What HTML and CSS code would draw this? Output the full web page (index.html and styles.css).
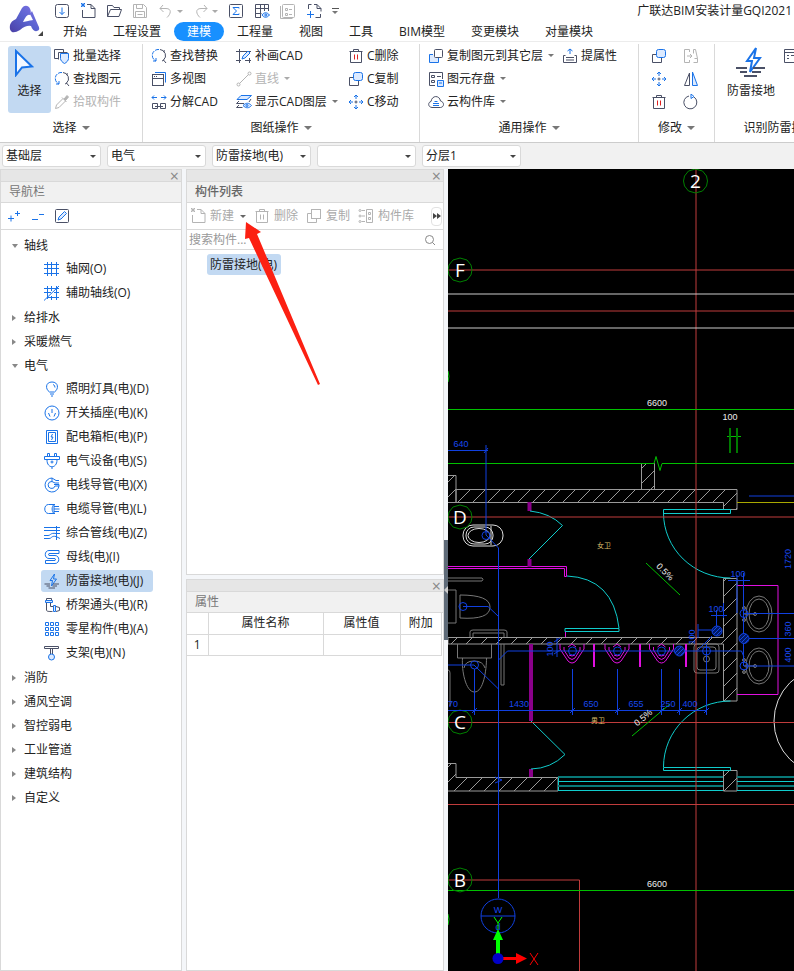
FILE: index.html
```html
<!DOCTYPE html>
<html lang="zh-CN">
<head>
    <meta charset="UTF-8">
    <meta name="viewport" content="width=device-width, initial-scale=1.0">
    <title>广联达BIM安装计量GQI2021</title>
    <link rel="stylesheet" href="styles.css">
</head>
<body>

<!-- Icon set -->
<svg class="sprite" aria-hidden="true">
    <symbol id="i-down" viewBox="0 0 16 16"><rect class="k" x="1.5" y="1.5" width="13" height="13" rx="2"/><path class="b" d="M8 4.500v7M5.500 9L8 11.500L10.500 9"/></symbol>
    <symbol id="i-new" viewBox="0 0 16 16"><path class="k" d="M7 1.500h4l4 4v9H2.500V7M11 1.500v4h4"/><path class="b" d="M1 0l4 4M5 0L1 4M3 0v4M1 2h4"/></symbol>
    <symbol id="i-open" viewBox="0 0 16 16"><path class="k" d="M1.500 13.500v-11h5l1.500 2h5.500v2M1.500 13.500l3-7h11l-2.500 7z"/></symbol>
    <symbol id="i-save" viewBox="0 0 16 16"><path class="k" d="M1.500 1.500h10l3 3v10h-13zM4.500 1.500v4h6v-4M3.500 14.500v-6h9v6M5.500 11.500h5"/></symbol>
    <symbol id="i-undo" viewBox="0 0 16 16"><path class="k" d="M5 2L2 5.500L5.500 9M2 5.500h6c6 0 5 5.500 1 9"/></symbol>
    <symbol id="i-redo" viewBox="0 0 16 16"><path class="k" d="M11 2l3 3.500L10.500 9M14 5.500H8c-6 0-5 5.500-1 9"/></symbol>
    <symbol id="i-sum" viewBox="0 0 16 16"><rect class="k" x="1.500" y="1.500" width="13" height="13" rx="1"/><path class="b" d="M11 5.500V4.500H5L8.500 8L5 11.500h6v-1"/></symbol>
    <symbol id="i-gridview" viewBox="0 0 16 16"><path class="k" d="M7 14.500H1.500v-13h13V8M1.500 5.500h13M1.500 10.500h6M6.500 1.500v13M10.500 1.500V8"/><path class="b f" d="M8 12c2-3 5-3 7.500 0c-2.500 3-5.500 3-7.500 0z"/><circle class="b" cx="11.800" cy="12" r="1"/></symbol>
    <symbol id="i-form" viewBox="0 0 16 16"><rect class="k" x="2.500" y="1.500" width="12" height="13" rx="1"/><path class="k" d="M0.500 3v12.500h12M5.500 5.500h2v2h-2zM5.500 10.500h2v2h-2zM9 6.500h3M9 11.500h3"/></symbol>
    <symbol id="i-pageadd" viewBox="0 0 16 16"><path class="k" d="M2.500 6V1.500h3M8 1.500h3l4 4v3M11 1.500v4h4M14.500 11v3.500h-5"/><path class="b" d="M4.500 8v7M1 11.500h7"/></symbol>
    <symbol id="i-batch" viewBox="0 0 16 16"><path class="k" d="M4 10.500H0.500v-9h9V4"/><path class="k w" d="M4.500 11.500v-7h9"/><path class="b f" d="M6.500 5.500h8v5c0 2-2 4-4 5c-2-1-4-3-4-5z"/></symbol>
    <symbol id="i-find" viewBox="0 0 16 16"><path class="b" stroke-dasharray="4 1" d="M8 1.500a6 6 0 0 0-3 11.500M5 13v-3M5 13H2"/><path class="k" d="M9 1.500a6 6 0 0 1 3.500 10.500l2.500 3M12 4l2-1.500M11 13l2-1"/></symbol>
    <symbol id="i-pick" viewBox="0 0 16 16"><path class="k" d="M9 4.500L2.500 11L1.500 14.500L5 13.500L11.500 7M8 3.500l4.500 4.500"/><path class="k g" d="M10 5l3-3.500l1.500 1.500L11.500 6.500z"/></symbol>
    <symbol id="i-multi" viewBox="0 0 16 16"><path class="b" d="M4 1.500h10.500v10"/><rect class="k" x="1.500" y="3.500" width="11" height="11"/><path class="k" d="M1.500 7.500h11M3 5.500h1M5 5.500h1"/></symbol>
    <symbol id="i-split" viewBox="0 0 16 16"><path class="b" d="M6 3.500H1M3 1.500L1 3.500L3 5.500M10 3.500h5M13 1.500l2 2l-2 2"/><path class="k" d="M1.500 14.500v-5h5v5zM9.500 14.500v-5h5v5zM4 12.500h8"/></symbol>
    <symbol id="i-draw" viewBox="0 0 16 16"><path class="k" d="M3.500 1v14M0 3.500h15M0 12.500h5M13.500 10v5M9 12.500h6"/><path class="b f" d="M6 11l1-3L12 3l2 2l-5 5z"/></symbol>
    <symbol id="i-line" viewBox="0 0 16 16"><path class="k" d="M3.500 12.500l9-9"/><circle class="k" cx="2.500" cy="13.500" r="1.500"/><circle class="k" cx="13.500" cy="2.500" r="1.500"/></symbol>
    <symbol id="i-layers" viewBox="0 0 16 16"><path class="b f" d="M1 5.500L5 1.500h10.500L11 5.500z"/><path class="k" d="M0.500 9.500H8M0.500 13.500h6M0.500 9.500L3 7M0.500 13.500L3 11M15 5l-2 3"/><path class="b f" d="M7 11.500c3-3 6-3 8.500 0c-2.500 3-5.500 3-8.500 0z"/><circle class="b" cx="11" cy="11.500" r="1"/></symbol>
    <symbol id="i-trash" viewBox="0 0 16 16"><path class="k" d="M1.500 3.500h13M5.500 3.500v-2h5v2M2.500 3.500v11h11v-11"/><path class="r" d="M6.500 6.500v5M9.500 6.500v5"/></symbol>
    <symbol id="i-copy" viewBox="0 0 16 16"><path class="k" d="M5 6.500H1.500v8h9V10"/><rect class="b f" x="5.500" y="1.500" width="9" height="8" rx="2"/></symbol>
    <symbol id="i-copyto" viewBox="0 0 16 16"><path class="b f" d="M5 6.500H1.500v8h9V10"/><rect class="k w" x="6.500" y="1.500" width="8" height="8" rx="1"/></symbol>
    <symbol id="i-move" viewBox="0 0 16 16"><path class="b" d="M8 5V1M6 3l2-2l2 2M8 11v4M6 13l2 2l2-2M5 8H1M3 6L1 8l2 2M11 8h4M13 6l2 2l-2 2"/><path class="k" d="M6.500 8h3M8 6.500v3"/></symbol>
    <symbol id="i-store" viewBox="0 0 16 16"><path class="k" d="M7 14.500H1.500v-13h13V8M3.500 4.500h3v2h-3zM3.500 9.500h3v2h-3zM9 5.500h4"/><path class="b f" d="M9.500 9.500h6v6h-6zM11 12h3"/></symbol>
    <symbol id="i-cloud" viewBox="0 0 16 16"><path class="k" d="M4 13.500C-0.500 13 0 8 3 7.500C4 1 11.500 1 12.500 7c4 1 4 6 0 6.500z"/><path class="b" d="M5 11.500h6M5 9.500h6M6.500 7.500h3"/></symbol>
    <symbol id="i-lift" viewBox="0 0 16 16"><path class="b" d="M8 6V1M5.500 3L8 1l2.500 2"/><path class="k" d="M3.500 7.500h-2v7h13v-7h-2M4 9.500h8M4 12h8"/></symbol>
    <symbol id="i-extend" viewBox="0 0 16 16"><path class="k" d="M6.500 4V1.500h-5v13h5V12M4 8h5M7 6l2 2l-2 2M10.500 1.500h2l2 9v4h-4M10.500 1.500v4M14.500 10.500h-3"/></symbol>
    <symbol id="i-mirror" viewBox="0 0 16 16"><path class="k" d="M6.500 2v12.500h-5z"/><path class="b f" d="M9.500 1v13.500h5z"/></symbol>
    <symbol id="i-rotate" viewBox="0 0 16 16"><path class="k" d="M11 3a6.500 6.500 0 1 1-5-1"/><path class="b" d="M8 0l3 2.500L8 4.500z"/></symbol>
    <symbol id="i-bolt" viewBox="0 0 32 32"><path class="b" stroke-width="2" d="M21 2L12 15h5l-2 11L25 12h-6z"/><path class="k" stroke-width="2" d="M1 22h11M18 22h12M5 26h7M17 26h9M9 30h13"/></symbol>
    <symbol id="i-sheet" viewBox="0 0 16 16"><path class="k" d="M1.500 1.500h13v13h-13zM1.500 4.500h13M4 7.500h2M4 10.500h2M8 7.500h5"/></symbol>
    <symbol id="i-expand" viewBox="0 0 16 16"><path class="b" d="M2 10.500h6M5 7.500v6M9 5.500h5M11.500 3v5"/></symbol>
    <symbol id="i-collapse" viewBox="0 0 16 16"><path class="b" d="M2 11.500h6M9 6.500h5"/></symbol>
    <symbol id="i-edit" viewBox="0 0 16 16"><rect class="k" x="1.500" y="1.500" width="13" height="13" rx="1"/><path class="b f" d="M4 12l1-3l5.500-5.500l2 2L7 11z"/></symbol>
    <symbol id="i-dup" viewBox="0 0 16 16"><path class="k" d="M5 5.500H1.500v9h9V11"/><rect class="k w" x="5.500" y="1.500" width="9" height="9"/></symbol>
    <symbol id="i-lib" viewBox="0 0 16 16"><path class="k" d="M8.500 1.500h6v13h-6zM10.500 4.500h2v2h-2zM10.500 9.500h2v2h-2zM3.500 2.500H7M3.500 8H7M3.500 13.500H7"/><circle class="k" cx="2" cy="2.500" r="1"/><circle class="k" cx="2" cy="8" r="1"/><circle class="k" cx="2" cy="13.500" r="1"/></symbol>
    <symbol id="i-search" viewBox="0 0 16 16"><circle class="k" cx="7.500" cy="7.500" r="4"/><path class="k" d="M10.500 10.500L13 13"/></symbol>
    <!-- tree icons -->
    <symbol id="t-grid" viewBox="0 0 16 16"><path class="b" d="M3.500 1v14M7.500 1v14M12.500 1v14M0 3.500h15M0 7.500h15M0 12.500h15"/></symbol>
    <symbol id="t-aux" viewBox="0 0 16 16"><path class="b" d="M3.500 1v13M7.500 1v5M7.500 11v4M12.500 1v14M0 3.500h15M0 7.500h7M10 7.500h5M3 12.500h12M0 15.500L15 1"/></symbol>
    <symbol id="t-lamp" viewBox="0 0 16 16"><path class="b" d="M5.500 11C1 8 1.500 1 8 1s7 7 2.500 10zM6 13h4M7 15h2M9 3.500q2 0.500 2 3"/></symbol>
    <symbol id="t-socket" viewBox="0 0 16 16"><circle class="b" cx="8" cy="8" r="7"/><path class="b" d="M8 4v4M4.500 8l1.500 3.500M11.500 8L10 11.500"/></symbol>
    <symbol id="t-box" viewBox="0 0 16 16"><path class="b" d="M2.500 1.500h11v13h-11zM4.500 3.500h7v9h-7zM8.500 5L7 8h2l-1.500 3"/></symbol>
    <symbol id="t-device" viewBox="0 0 16 16"><path class="b" d="M0.500 3.500h15v3h-15zM3.500 3V0.500h2V3M10.500 3V0.500h2V3M3 7c0 9 10 9 10 0M7 15h2"/><circle class="b" cx="8" cy="9" r="1"/></symbol>
    <symbol id="t-wire" viewBox="0 0 16 16"><path class="b" d="M8 1a7 7 0 1 0 7 8h-4a3.500 3.500 0 1 1-3-4.500M15 9V7.500h-5M8 1v3.500M8 1l4 2.500h3M8 4.500l3 1.500h4"/></symbol>
    <symbol id="t-cable" viewBox="0 0 16 16"><path class="b" d="M11 3.500H4.500c-5 0-5 9 0 9H11M10 3.500c-2.500 2-2.500 7 0 9zM10 5.500h5M10 8h5.500M10 10.500h5"/></symbol>
    <symbol id="t-mixed" viewBox="0 0 16 16"><path class="b" d="M0 2.500h16M0 5.500h16M0 10.500h4c3 0 2-3 8-2h4M0 13.500h5c3 0 2-3 7-2l4 2M12.500 1v14"/></symbol>
    <symbol id="t-bus" viewBox="0 0 16 16"><path class="b" d="M15 1.500H5c-5 0-5 8 0 8h6q1 0 0 2H1.500v3H11c5 0 5-8 0-8H5q-1 0 0-2h10z"/></symbol>
    <symbol id="t-bridge" viewBox="0 0 16 16"><path class="k" d="M2.500 3V1.500h5V3M2.500 6v7c0 1.500 2 1.500 6 1.500M6.500 6v3.500h2.500M12 9.500l3.500 1v3l-3.500 1"/><path class="b f" d="M1.500 3.500h7v2h-7zM9.500 8.500h2v6h-2z"/></symbol>
    <symbol id="t-dots" viewBox="0 0 16 16"><path class="b" d="M1.500 1.500h3v3h-3zM6.500 1.500h3v3h-3zM11.500 1.500h3v3h-3zM1.500 6.500h3v3h-3zM6.500 6.500h3v3h-3zM11.500 6.500h3v3h-3zM1.500 11.500h3v3h-3zM6.500 11.500h3v3h-3zM11.500 11.500h3v3h-3z"/></symbol>
    <symbol id="t-hanger" viewBox="0 0 16 16"><path class="k" d="M0.500 3.500v-2h14v2zM6.500 3.500V9M8.500 3.500V9"/><circle class="b f" cx="7.500" cy="12" r="3"/></symbol>
</svg>

<!-- Title bar and tabs -->
<header class="header">
    <button class="logo" aria-label="菜单">
        <svg viewBox="0 0 36 36">
            <defs><linearGradient id="lg" x1="1" y1="0" x2="0" y2="1"><stop offset="0" stop-color="#8273e6"/><stop offset="0.500" stop-color="#5a63cf"/><stop offset="1" stop-color="#4a3fa5"/></linearGradient></defs>
            <path d="M14 5Q17 1 21 4Q24 8 22 12Q19 10 15 19Q24 17 25 17L22 11L24 8L30 22Q33 27 29 28Q25 29 23 23Q18 22 12 27Q7 30 4 29Q1 27 2 22Q3 18 8 16Z" fill="url(#lg)"/>
            <path d="M35 28v5h-5z" fill="#444"/>
        </svg>
    </button>
    <div class="header-main">
        <div class="titlebar">
            <div class="quick">
                <button aria-label="导入"><svg class="icon"><use href="#i-down"/></svg></button>
                <button aria-label="新建"><svg class="icon"><use href="#i-new"/></svg></button>
                <button aria-label="打开"><svg class="icon"><use href="#i-open"/></svg></button>
                <button aria-label="保存" class="off"><svg class="icon"><use href="#i-save"/></svg></button>
                <button aria-label="撤销" class="off with-arrow"><svg class="icon"><use href="#i-undo"/></svg><i class="arrow"></i></button>
                <button aria-label="恢复" class="off with-arrow"><svg class="icon"><use href="#i-redo"/></svg><i class="arrow"></i></button>
                <button aria-label="汇总计算"><svg class="icon"><use href="#i-sum"/></svg></button>
                <button aria-label="查看工程量"><svg class="icon"><use href="#i-gridview"/></svg></button>
                <button aria-label="报表" class="off"><svg class="icon"><use href="#i-form"/></svg></button>
                <button aria-label="添加图纸"><svg class="icon"><use href="#i-pageadd"/></svg></button>
                <button aria-label="更多" class="more"><i class="arrow"></i></button>
            </div>
            <span class="app-title">广联达BIM安装计量GQI2021</span>
        </div>
        <nav class="tabs">
            <button>开始</button>
            <button>工程设置</button>
            <button class="active">建模</button>
            <button>工程量</button>
            <button>视图</button>
            <button>工具</button>
            <button>BIM模型</button>
            <button>变更模块</button>
            <button>对量模块</button>
        </nav>
    </div>
</header>

<!-- Ribbon -->
<div class="ribbon">
    <section class="group group-select">
        <div class="tools">
            <button class="big active">
                <svg class="cursor" viewBox="0 0 20 28"><path d="M2 2v24l6-7.500l10-1z" fill="#f4f8ff" stroke="#1a73e8" stroke-width="2"/></svg>
                选择
            </button>
            <button><svg class="icon"><use href="#i-batch"/></svg>批量选择</button>
            <button><svg class="icon"><use href="#i-find"/></svg>查找图元</button>
            <button class="off"><svg class="icon"><use href="#i-pick"/></svg>拾取构件</button>
        </div>
        <h2>选择<i class="arrow"></i></h2>
    </section>
    <section class="group group-drawing">
        <div class="tools">
            <button><svg class="icon"><use href="#i-find"/></svg>查找替换</button>
            <button><svg class="icon"><use href="#i-multi"/></svg>多视图</button>
            <button><svg class="icon"><use href="#i-split"/></svg>分解CAD</button>
            <button><svg class="icon"><use href="#i-draw"/></svg>补画CAD</button>
            <button class="off"><svg class="icon"><use href="#i-line"/></svg>直线<i class="arrow"></i></button>
            <button><svg class="icon"><use href="#i-layers"/></svg>显示CAD图层<i class="arrow"></i></button>
            <button><svg class="icon"><use href="#i-trash"/></svg>C删除</button>
            <button><svg class="icon"><use href="#i-copy"/></svg>C复制</button>
            <button><svg class="icon"><use href="#i-move"/></svg>C移动</button>
        </div>
        <h2>图纸操作<i class="arrow"></i></h2>
    </section>
    <section class="group group-common">
        <div class="tools">
            <button><svg class="icon"><use href="#i-copyto"/></svg>复制图元到其它层<i class="arrow"></i></button>
            <button><svg class="icon"><use href="#i-store"/></svg>图元存盘<i class="arrow"></i></button>
            <button><svg class="icon"><use href="#i-cloud"/></svg>云构件库<i class="arrow"></i></button>
            <button><svg class="icon"><use href="#i-lift"/></svg>提属性</button>
        </div>
        <h2>通用操作<i class="arrow"></i></h2>
    </section>
    <section class="group group-modify">
        <div class="tools">
            <button aria-label="复制"><svg class="icon"><use href="#i-copy"/></svg></button>
            <button aria-label="移动"><svg class="icon"><use href="#i-move"/></svg></button>
            <button aria-label="删除"><svg class="icon"><use href="#i-trash"/></svg></button>
            <button aria-label="延伸" class="off"><svg class="icon"><use href="#i-extend"/></svg></button>
            <button aria-label="镜像"><svg class="icon"><use href="#i-mirror"/></svg></button>
            <button aria-label="旋转"><svg class="icon"><use href="#i-rotate"/></svg></button>
        </div>
        <h2>修改<i class="arrow"></i></h2>
    </section>
    <section class="group group-ground">
        <div class="tools">
            <button class="big"><svg class="bolt"><use href="#i-bolt"/></svg>防雷接地</button>
            <button aria-label="识别表"><svg class="icon"><use href="#i-sheet"/></svg></button>
        </div>
        <h2>识别防雷接地</h2>
    </section>
</div>

<!-- Filters -->
<div class="filters">
    <span class="select"><select aria-label="楼层"><option>基础层</option></select></span>
    <span class="select"><select aria-label="专业"><option>电气</option></select></span>
    <span class="select"><select aria-label="构件类型"><option>防雷接地(电)</option></select></span>
    <span class="select"><select aria-label="构件"><option></option></select></span>
    <span class="select"><select aria-label="分层"><option>分层1</option></select></span>
</div>

<main class="workspace">
    <!-- Navigation -->
    <aside class="panel nav-panel">
        <div class="panel-bar"><button class="close" aria-label="关闭">×</button></div>
        <h3>导航栏</h3>
        <div class="panel-tools nav-tools">
            <button aria-label="展开"><svg class="icon"><use href="#i-expand"/></svg></button>
            <button aria-label="折叠"><svg class="icon"><use href="#i-collapse"/></svg></button>
            <button aria-label="编辑"><svg class="icon"><use href="#i-edit"/></svg></button>
        </div>
        <ul class="tree">
            <li><button class="branch open">轴线</button>
                <ul>
                    <li><button><svg class="icon"><use href="#t-grid"/></svg>轴网(O)</button></li>
                    <li><button><svg class="icon"><use href="#t-aux"/></svg>辅助轴线(O)</button></li>
                </ul>
            </li>
            <li><button class="branch">给排水</button></li>
            <li><button class="branch">采暖燃气</button></li>
            <li><button class="branch open">电气</button>
                <ul>
                    <li><button><svg class="icon"><use href="#t-lamp"/></svg>照明灯具(电)(D)</button></li>
                    <li><button><svg class="icon"><use href="#t-socket"/></svg>开关插座(电)(K)</button></li>
                    <li><button><svg class="icon"><use href="#t-box"/></svg>配电箱柜(电)(P)</button></li>
                    <li><button><svg class="icon"><use href="#t-device"/></svg>电气设备(电)(S)</button></li>
                    <li><button><svg class="icon"><use href="#t-wire"/></svg>电线导管(电)(X)</button></li>
                    <li><button><svg class="icon"><use href="#t-cable"/></svg>电缆导管(电)(L)</button></li>
                    <li><button><svg class="icon"><use href="#t-mixed"/></svg>综合管线(电)(Z)</button></li>
                    <li><button><svg class="icon"><use href="#t-bus"/></svg>母线(电)(I)</button></li>
                    <li><button class="selected"><svg class="icon"><use href="#i-bolt"/></svg>防雷接地(电)(J)</button></li>
                    <li><button><svg class="icon"><use href="#t-bridge"/></svg>桥架通头(电)(R)</button></li>
                    <li><button><svg class="icon"><use href="#t-dots"/></svg>零星构件(电)(A)</button></li>
                    <li><button><svg class="icon"><use href="#t-hanger"/></svg>支架(电)(N)</button></li>
                </ul>
            </li>
            <li><button class="branch">消防</button></li>
            <li><button class="branch">通风空调</button></li>
            <li><button class="branch">智控弱电</button></li>
            <li><button class="branch">工业管道</button></li>
            <li><button class="branch">建筑结构</button></li>
            <li><button class="branch">自定义</button></li>
        </ul>
    </aside>

    <div class="side">
        <!-- Component list -->
        <section class="panel list-panel">
            <div class="panel-bar"><button class="close" aria-label="关闭">×</button></div>
            <h3 class="strong">构件列表</h3>
            <div class="panel-tools list-tools off">
                <button><svg class="icon"><use href="#i-new"/></svg>新建<i class="arrow dark"></i></button>
                <button><svg class="icon"><use href="#i-trash"/></svg>删除</button>
                <button><svg class="icon"><use href="#i-dup"/></svg>复制</button>
                <button><svg class="icon"><use href="#i-lib"/></svg>构件库</button>
                <button class="overflow" aria-label="更多"><svg viewBox="0 0 8 6"><path d="M0 0l4 3l-4 3zM4 0l4 3l-4 3z" fill="#444"/></svg></button>
            </div>
            <label class="search off">
                <input type="text" placeholder="搜索构件..." aria-label="搜索构件">
                <svg class="icon"><use href="#i-search"/></svg>
            </label>
            <div class="list">
                <button class="selected">防雷接地(电)</button>
            </div>
        </section>

        <!-- Properties -->
        <section class="panel prop-panel">
            <div class="panel-bar"><button class="close" aria-label="关闭">×</button></div>
            <h3>属性</h3>
            <table>
                <thead>
                    <tr><th class="num"></th><th class="name">属性名称</th><th class="value">属性值</th><th>附加</th></tr>
                </thead>
                <tbody>
                    <tr><td class="num">1</td><td></td><td></td><td></td></tr>
                </tbody>
            </table>
        </section>
    </div>

    <div class="splitter"><button aria-label="收起面板"><i></i></button></div>

    <!-- CAD drawing -->
    <div class="canvas">
        <svg class="cad" viewBox="448 169 346 802" preserveAspectRatio="xMinYMin slice">
            <defs>
                <pattern id="hatch" width="15" height="15" patternUnits="userSpaceOnUse"><path d="M0 15L15 0" stroke="#999"/></pattern>
                <pattern id="drain" width="4" height="4" patternUnits="userSpaceOnUse"><rect width="4" height="4" fill="#001a66"/><path d="M0 4L4 0" stroke="#1447e0"/></pattern>
                <g id="urinal"><path d="M-12 0v5l8 12q4 4 8 0l8-12V0M-8 3v3l5 8q3 3 6 0l5-8V3M-4 3l4-3l4 3M-3 11q3 2 6 0"/></g>
                <g id="basin"><ellipse rx="13" ry="18"/><ellipse rx="10" ry="15"/><path d="M-15 0h11M-15-7v4M-15 3v4"/><circle cx="-15" cy="-6" r="1.500"/><circle cx="-15" cy="6" r="1.500"/><circle cx="-4" r="1.500"/></g>
                <path id="bubble" d="M0-12l7 2l4 5l1 5l-1 5l-4 5l-7 2l-7-2l-4-5l-1-5l1-5l4-5z"/>
            </defs>

            <!-- walls -->
            <g class="wall">
                <path d="M448 475.500h8v27h-8"/>
                <path d="M456 489.500h281v20h-13.500v-7H456z"/>
                <path d="M641.500 463.500h13v26h-13z"/>
                <path d="M723.500 578.500H737V701h-13.500V644H448v-6.500h275.500z"/>
                <path d="M448 763.500h8v14h102V791H448"/>
                <path d="M723.500 770.500H737V791h-13.500z"/>
            </g>

            <!-- fixtures -->
            <g class="fixture">
                <path d="M448 578h34q2 1 0 3h-34M448 590h8v33h-8M460 595q30 0 30 12q0 13-30 11zM470 637v-5q0-2 3-2h31q3 0 3 2v5M473 637v-4h31v4"/>
                <path d="M457.500 644v14h34v-14M462.500 658c-1 12 3 34 12 34s12-22 12-34M464 668q1-7 10-7t11 7M501 644v41h3v-41M448 670q2 0 2 3v33"/>
                <rect x="694" y="644" width="25" height="29" rx="3"/><rect x="697" y="647" width="19" height="23" rx="3"/>
                <circle cx="706.500" cy="659" r="3"/><path d="M706.500 648v8"/>
                <use href="#basin" x="759" y="614"/><use href="#basin" x="759" y="666"/>
            </g>
            <g class="white">
                <rect x="463" y="525" width="40" height="21" rx="10"/><rect x="466" y="527" width="27" height="17" rx="8"/><ellipse cx="479" cy="535.500" rx="11" ry="7"/><path d="M491 526v19"/>
                <circle cx="828" cy="721" r="54"/>
            </g>

            <!-- partitions -->
            <g class="magenta">
                <path d="M448 566.500h118.500v10h-2v-8H448M565.500 631v6M737 585.500h41V694.500h-41"/>
                <path d="M594 644v23M640 644v23M686 644v23" stroke-width="2"/>
                <path d="M529.500 502v9M529.500 559v8M531 644v77M531 769v8" stroke="#8a008a" stroke-width="4"/>
                <use href="#urinal" x="572" y="644"/><use href="#urinal" x="617" y="644"/><use href="#urinal" x="661.500" y="644"/>
            </g>

            <!-- doors and windows -->
            <g class="cyan">
                <path d="M530 511q20 2 32.500 14.500L529 559M567 576q46 2 52 52M565 628.500h54v3h-54z"/>
                <path d="M663.500 509.500h67v4h-67zM663.500 513a67 65 0 0 0 67 65"/>
                <path d="M531 721l34 33.500q-14 14-34 14.500M663.500 767.500h67v3h-67zM663.500 767a67 66 0 0 1 67-66"/>
                <path d="M558.500 777v14M558 781.500h165M558 790.500h165M737 781.500h57M737 790.500h57"/>
                <path d="M558 777h165M558 786h165M737 777h57M737 786h57" stroke="#087878" stroke-width="2"/>
            </g>

            <!-- grid lines -->
            <g class="axis">
                <path d="M696 169v802M448 270h346M448 311h346M448 517h346M448 722.500h346M448 804.500h346M448 880h131.500v91"/>
            </g>
            <path class="gray" d="M448 294h346M448 328h346"/>
            <path class="yellow" d="M737 502.500h57"/>
            <g class="green">
                <path d="M448 409.500h346M448 463.500h206l2-7l4 14l2-7h132M448 890.500h346M727 436.500h14M646 563l34 32M632 736l38-32"/>
                <path d="M730 428v25M737 428v25" stroke="#007a00" stroke-width="2"/>
                <path d="M448 371q2 5 0 11M448 914q2 5 0 11"/>
            </g>
            <g class="bubbles">
                <use href="#bubble" x="695.500" y="181"/><use href="#bubble" x="460" y="270"/><use href="#bubble" x="460" y="517"/><use href="#bubble" x="460" y="722"/><use href="#bubble" x="460" y="880"/>
            </g>

            <!-- pipes and dimensions -->
            <g class="blue">
                <path d="M448 450.500h40M484 453l4-5M486 445v90l12.500 13v350M463 606.500h25l10.500 10M448 665h26l24.500 24M474.500 669v46M498.500 660l9-9h234l2.500 6"/>
                <path d="M448 710.500h259M572.500 669v46M617.500 669v46M661.500 669v46M679.500 669v46M706.500 644v71"/>
                <path d="M472 713l5-5M570 713l5-5M615 713l5-5M659 713l5-5M677 713l5-5M704 713l5-5"/>
                <path d="M557 638v19M554 642l6-4M554 654l6-4M711 615.500h16M716.500 610v16M723.500 603v15M728 580.500h22M737 575v38M743.500 573v93M744 613.500h50M744 638.500h50M744 666h50M749 496h45M698 624v14M698 630h14M698 650l14-14"/>
                <path d="M495 777l7 3l-7 3"/>
                <circle cx="486" cy="535.500" r="4"/><circle cx="463" cy="606.500" r="4"/><circle cx="474.500" cy="665" r="4"/><circle cx="572.500" cy="651" r="4"/><circle cx="617.500" cy="651" r="4"/><circle cx="661.500" cy="651" r="4"/><circle cx="706.500" cy="651" r="4"/><circle cx="744" cy="613.500" r="4"/><circle cx="744" cy="666" r="4"/>
                <circle cx="498" cy="916" r="17"/><path d="M481 916h34"/>
                <g class="drains"><circle cx="717" cy="631" r="5"/><circle cx="744" cy="638.500" r="5"/><circle cx="679.500" cy="651" r="5"/></g>
            </g>

            <!-- labels -->
            <g class="mark">
                <text x="695.500" y="188">2</text><text x="460" y="277">F</text><text x="460" y="524">D</text><text x="460" y="729">C</text><text x="460" y="887">B</text>
            </g>
            <g class="dim">
                <text x="657" y="406">6600</text><text x="730" y="420">100</text><text x="657" y="887">6600</text>
                <text transform="translate(663 574) rotate(45)">0.5%</text><text transform="translate(645 720) rotate(-40)">0.5%</text>
            </g>
            <g class="dim dim-blue">
                <text x="461" y="447">640</text><text x="453" y="707">70</text><text x="519" y="707">1430</text><text x="591" y="707">650</text><text x="636" y="707">655</text><text x="668" y="707">250</text><text x="690" y="707">400</text>
                <text x="716" y="612">100</text><text x="738" y="577">100</text>
                <text transform="translate(553 649) rotate(-90)">100</text><text transform="translate(695 637) rotate(-90)">100</text>
                <text transform="translate(791 559) rotate(-90)">1720</text><text transform="translate(791 629) rotate(-90)">360</text><text transform="translate(791 655) rotate(-90)">400</text>
                <text x="498" y="913">W</text><text x="498" y="930">d</text>
            </g>
            <g class="room"><text x="604" y="548">女卫</text><text x="598" y="723">男卫</text></g>

            <!-- UCS axes -->
            <path d="M496 957V940h-3l5-11l5 11h-3v17z" fill="#0f0"/>
            <path d="M502 957h14v-4l11 5.500l-11 5.500v-4h-14z" fill="#f00"/>
            <circle cx="498" cy="958.500" r="5.500" fill="#0000c8"/>
            <path d="M494 917l4 6l4-6M498 923v6" fill="none" stroke="#0f0"/>
            <path d="M530 953l8 12M538 953l-8 12" fill="none" stroke="#f00"/>
        </svg>
    </div>
</main>

<!-- Pointer to the "new" drop-down -->
<svg class="pointer" viewBox="0 0 78 164" aria-hidden="true"><path d="M2 0l15 10l-4 2L76 162l-2 1L5 16l-4 1z" fill="#fc2012"/></svg>

</body>
</html>
```
FILE: styles.css
```css
* {
    box-sizing: border-box;
}
body {
    margin: 0;
    height: 100vh;
    display: flex;
    flex-direction: column;
    overflow: hidden;
    background-color: #f4f6f9;
    color: #222;
    font-family: "Open Sans", "Noto Sans CJK SC", sans-serif;
    font-size: 12px;
    line-height: 18px;
}
button, select, input {
    font: inherit;
    color: inherit;
    border: none;
    background: none;
    padding: 0;
    margin: 0;
}
button {
    display: flex;
    align-items: center;
    white-space: nowrap;
    cursor: pointer;
}
h2, h3, ul {
    margin: 0;
    padding: 0;
    font-size: 12px;
    font-weight: normal;
    list-style: none;
}

/* Icons */
.sprite {
    position: absolute;
    width: 0;
    height: 0;
}
.icon {
    width: 16px;
    height: 16px;
    flex: none;
    --dark: #4a5066;
    --blue: #1a73e8;
    --red: #e02020;
    --tint: #dceaff;
}
.bolt {
    width: 32px;
    height: 32px;
    --dark: #4a5066;
    --blue: #1a73e8;
}
.off .icon {
    --dark: #b4b4b4;
    --blue: #b4b4b4;
    --red: #b4b4b4;
    --tint: #fff;
}
.k, .b, .r {
    fill: none;
    stroke: var(--dark);
}
.b {
    stroke: var(--blue);
}
.r {
    stroke: var(--red);
}
.f {
    fill: var(--tint);
}
.w {
    fill: #fff;
}
.g {
    fill: var(--dark);
}
.arrow {
    flex: none;
    border: 3px solid transparent;
    border-top-color: #777;
    border-bottom: none;
    margin-left: 5px;
}
.off .arrow {
    border-top-color: #aaa;
}
.off .arrow.dark {
    border-top-color: #666;
}

/* Header */
.header {
    display: flex;
    flex: none;
    background-color: #fff;
    border-bottom: 1px solid #ececec;
}
.logo {
    width: 50px;
    padding-left: 8px;
}
.logo svg {
    width: 36px;
    height: 36px;
}
.header-main {
    flex: 1;
    min-width: 0;
}
.titlebar {
    display: flex;
    justify-content: space-between;
    height: 22px;
    padding: 0 2px 0 4px;
}
.quick {
    display: flex;
    align-items: center;
    gap: 10px;
}
.with-arrow {
    width: 25px;
}
.with-arrow .arrow {
    margin-left: 3px;
}
.more {
    width: 7px;
    border-top: 1px solid #555;
    padding-top: 2px;
}
.more .arrow {
    margin: 0;
}
.app-title {
    line-height: 22px;
    white-space: nowrap;
}
.tabs {
    display: flex;
}
.tabs button {
    height: 19px;
    padding: 0 13px;
    border-radius: 10px;
}
.tabs .active {
    background-color: #1890ff;
    color: #fff;
}

/* Ribbon */
.ribbon {
    display: flex;
    flex: none;
    background-color: #fff;
    border-bottom: 1px solid #ccc;
    overflow: hidden;
    padding-top: 2px;
}
.group {
    flex: none;
    border-right: 1px solid #d9d9d9;
    padding: 0 8px;
}
.tools {
    display: grid;
    grid-auto-flow: column;
    grid-template-rows: repeat(3, 23px);
    justify-items: start;
    align-items: center;
}
.tools button {
    gap: 3px;
}
.tools .arrow {
    margin-left: 2px;
}
.tools .off {
    color: #b4b4b4;
}
.tools .big {
    grid-row: 1 / 4;
    flex-direction: column;
    align-self: stretch;
    width: 43px;
    margin: 2px 0 0;
    padding: 3px 0 0;
    gap: 5px;
    border-radius: 3px;
}
.tools .big.active {
    background-color: #c2d9f2;
}
.cursor {
    width: 20px;
    height: 28px;
    margin-right: 12px;
}
.group h2 {
    display: flex;
    justify-content: center;
    align-items: center;
    height: 29px;
    white-space: nowrap;
}
.group h2 .arrow {
    border-width: 4px 4px 0;
}
.group-select .tools {
    grid-template-columns: 46px 80px;
}
.group-drawing {
    width: 277px;
}
.group-drawing .tools {
    grid-template-columns: 85px 112px auto;
    justify-content: start;
}
.group-common {
    width: 219px;
}
.group-common .tools {
    grid-template-columns: 134px auto;
    justify-content: start;
}
.group-modify {
    width: 76px;
    padding: 0 12px;
}
.group-modify .tools {
    grid-template-columns: 32px 16px;
}
.group-ground .tools {
    grid-template-columns: 60px 16px;
}
.group-ground {
    width: 130px;
}
.group-ground .big {
    width: 56px;
    padding: 0;
    gap: 4px;
}

/* Filters */
.filters {
    display: flex;
    flex: none;
    gap: 6px;
    padding: 2px;
    background-color: #f1f1f1;
}
.select {
    position: relative;
}
.select::after {
    content: "";
    position: absolute;
    right: 5px;
    top: 10px;
    border: 3px solid transparent;
    border-top-color: #444;
    border-bottom: none;
    pointer-events: none;
}
.select select {
    appearance: none;
    display: block;
    width: 99px;
    height: 22px;
    padding: 0 3px;
    background-color: #fff;
    border: 1px solid #d9d9d9;
    border-radius: 3px;
}

/* Panels */
.workspace {
    flex: 1;
    min-height: 0;
    display: flex;
}
.panel {
    display: flex;
    flex-direction: column;
    border: 1px solid #d9d9d9;
    background-color: #fff;
}
.nav-panel {
    width: 182px;
    margin-right: 4px;
    flex: none;
}
.side {
    width: 258px;
    flex: none;
    display: flex;
    flex-direction: column;
    gap: 4px;
}
.panel-bar {
    display: flex;
    justify-content: flex-end;
    height: 12px;
    background-color: #e6e6e6;
    border-bottom: 1px solid #d9d9d9;
}
.close {
    padding: 0 2px;
    font-size: 16px;
    line-height: 10px;
    color: #888;
}
.panel h3 {
    padding: 0 8px;
    line-height: 20px;
    background-color: #f1f1f1;
    color: #777;
    border-bottom: 1px solid #d9d9d9;
}
.panel h3.strong {
    font-weight: 500;
    color: #666;
}
.panel-tools {
    display: flex;
    align-items: center;
    height: 27px;
    border-bottom: 1px solid #d9d9d9;
}
.nav-tools {
    gap: 8px;
    padding-left: 5px;
}
.list-tools {
    gap: 8px;
    padding: 0 1px 0 3px;
    color: #aaa;
}
.list-tools button {
    gap: 4px;
}
.list-tools .overflow {
    justify-content: center;
    width: 11px;
    height: 19px;
    margin-left: auto;
    border: 1px solid #e2e2e2;
    border-radius: 4px;
}
.overflow svg {
    width: 8px;
    height: 6px;
    flex: none;
}
.list-tools .arrow {
    margin-left: 2px;
}

/* Tree */
.tree {
    padding-top: 4px;
    overflow: auto;
}
.branch {
    height: 24px;
    padding-left: 11px;
    gap: 6px;
}
.branch::before {
    content: "";
    box-sizing: border-box;
    width: 6px;
    border: 3px solid transparent;
    border-left: 4px solid #888;
    border-right: none;
}
.branch.open::before {
    border: 3px solid transparent;
    border-top: 4px solid #888;
    border-bottom: none;
}
.tree ul li {
    height: 24px;
}
.tree ul button {
    height: 22px;
    margin-left: 40px;
    padding: 0 10px 0 3px;
    gap: 6px;
    border-radius: 3px;
}
.tree .selected, .list .selected {
    background-color: #c2d9f2;
}

/* Component list */
.list-panel {
    height: 406px;
}
.search {
    display: flex;
    align-items: center;
    height: 20px;
    padding: 0 5px 0 2px;
    border-bottom: 1px solid #d9d9d9;
}
.search input {
    flex: 1;
    min-width: 0;
    outline: none;
}
.search input::placeholder {
    color: #999;
}
.search .icon {
    --dark: #888;
}
.list {
    padding: 4px 20px;
}
.list .selected {
    height: 21px;
    padding: 0 4px 0 3px;
    border-radius: 3px;
}

/* Properties */
.prop-panel {
    flex: 1;
}
.prop-panel table {
    width: 255px;
    border-collapse: collapse;
    table-layout: fixed;
}
.prop-panel th, .prop-panel td {
    height: 21px;
    padding: 0;
    border: 1px solid #d9d9d9;
    border-top: none;
    border-left: none;
    font-weight: normal;
    text-align: center;
}
.num {
    width: 21px;
}
.name {
    width: 115px;
}
.value {
    width: 77px;
}

/* Splitter */
.splitter {
    width: 4px;
    flex: none;
    padding-top: 371px;
}
.splitter button {
    width: 4px;
    height: 100px;
    background-color: #5f6b78;
}
.splitter i {
    border: 4px solid transparent;
    border-right-color: #ccc;
    border-left: none;
}

/* Drawing */
.canvas {
    flex: 1;
    min-width: 0;
    background-color: #000;
}
.cad {
    display: block;
    width: 100%;
    height: 100%;
}
.cad g, .cad .gray, .cad .yellow {
    fill: none;
}
.wall {
    stroke: #999;
}
.cad .wall path {
    fill: url(#hatch);
}
.fixture {
    stroke: #777;
}
.white {
    stroke: #ddd;
}
.magenta {
    stroke: #e010e0;
}
.cyan {
    stroke: #10cccc;
}
.axis {
    stroke: #c03c3c;
}
.gray {
    stroke: #ccc;
}
.yellow {
    stroke: #a8a800;
}
.green {
    stroke: #00c000;
}
.bubbles {
    stroke: #008000;
}
.blue {
    stroke: #1040e0;
}
.cad .drains {
    fill: url(#drain);
}
.cad text {
    text-anchor: middle;
}
.cad .mark {
    fill: #fff;
    font-size: 19px;
}
.cad .dim {
    fill: #eee;
    font-family: "Liberation Sans Narrow", "Liberation Sans", sans-serif;
    font-size: 9px;
}
.cad .dim-blue {
    fill: #1848f0;
}
.cad .room {
    fill: #d9bb6a;
    font-size: 7px;
}

.pointer {
    position: absolute;
    left: 244px;
    top: 222px;
    width: 78px;
    height: 164px;
    pointer-events: none;
}
```
